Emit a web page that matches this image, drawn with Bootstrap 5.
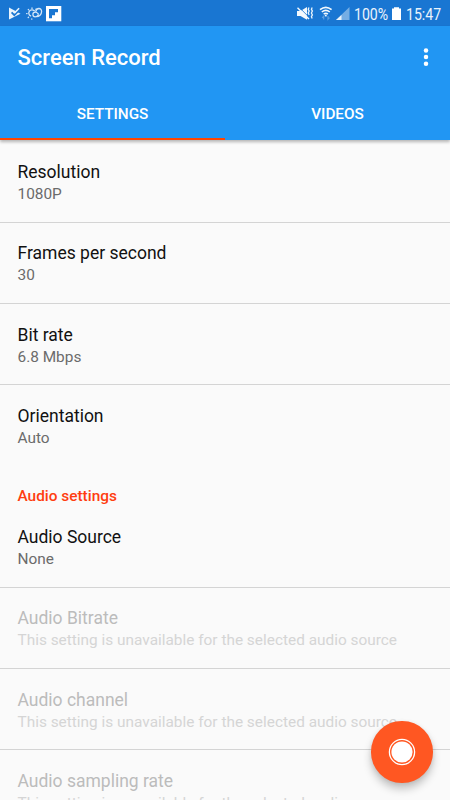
<!DOCTYPE html>
<html lang="en">
<head>
<meta charset="utf-8">
<meta name="viewport" content="width=device-width, initial-scale=1">
<title>Screen Record</title>
<link href="https://cdn.jsdelivr.net/npm/bootstrap@5.3.0/dist/css/bootstrap.min.css" rel="stylesheet">
<style>
body{font-family:Roboto,sans-serif;background:#fafafa;letter-spacing:0}
.screen{width:450px;height:800px;background:#fafafa}
.status{height:26px;background:#1976d2;padding:0 8px 0 7px;color:#e9f3fc}
.status svg{display:block;flex:none}
.condensed{font-size:17px;line-height:26px;transform-origin:0 50%;transform:scaleX(.83);white-space:nowrap;padding-top:2px}
.pct{width:38px}
.clock{width:36px;margin-left:5px}
.appbar{height:114px;background:#2196f3;box-shadow:0 2px 3px rgba(0,0,0,.28);z-index:2}
.titlebar{height:61.5px;padding:3px 20px 0 17.5px}
.app-title{font-size:22px;line-height:26px;font-weight:500}
.tabs .nav-link{height:52.5px;font-size:15.3px;font-weight:500;line-height:20px;color:#fff;padding:16.5px 0 0;border-bottom:2.5px solid transparent;border-radius:0}
.tabs .nav-link.active{border-bottom-color:#ff4500}
.settings-list{padding-top:1.5px}
.setting{height:81.25px;padding:19.5px 17.5px 0;background:transparent;border:0;border-bottom:1px solid #d4d4d4;border-radius:0}
.setting.last-in-group{border-bottom-color:transparent}
.label{font-size:17.5px;line-height:22px;color:#111}
.value{font-size:15.4px;line-height:23.5px;color:#6b6b6b}
.unavailable .label{color:#bcbcbc}
.unavailable .value{color:#d5d5d5}
.group-title{height:40px;padding:19.5px 17.5px 0;font-size:15.4px;line-height:20px;font-weight:500;color:#ff3d10}
.fab{right:17.5px;bottom:17.5px;width:61.25px;height:61.25px;background:#ff5722;box-shadow:0 6px 9px rgba(0,0,0,.22),0 1px 4px rgba(0,0,0,.08);z-index:3}
</style>
</head>
<body>
<div class="screen position-relative overflow-hidden d-flex flex-column">
  <div class="status d-flex align-items-center flex-shrink-0">
    <svg width="56" height="26" viewBox="0 0 56 26" fill="none">
      <path d="M2 7.500l11.500 6.200L2 19.500z" fill="#e9f3fc"/>
      <path d="M4.600 12.300l2.700 2.800 5-5.300" stroke="#1976d2" stroke-width="1.800"/>
      <path d="M7.500 13l4.600-4.800" stroke="#e9f3fc" stroke-width="1.600"/>
      <g stroke="#d3e6f8" stroke-width="1.300" stroke-linecap="round">
        <path d="M27.300 10.800a3.200 3.200 0 1 0-3.700 5.100"/>
        <path d="M25 7.900v.5M21.300 9.500l.4.400M19.600 13.600h.5M21.200 17.500l.4-.4M28.900 9.200l.3-.3M24.800 18.900v.3"/>
        <path d="M31.300 14.800c-.9 1.600-2 2-3 2-3.200-.2-3.200-4.600 0-4.600 1.200 0 2 .7 2.900 1.600M28.700 12c.7-4.700 5.900-4.400 5.900-.6 0 3-2.600 5.300-5 5.300"/>
      </g>
      <path d="M39 6h15.300v15.300H39z" fill="#fff"/>
      <path d="M42 9h9v3.300h-3v3h-3v3h-3z" fill="#1976d2"/>
    </svg>
    <svg class="ms-auto" width="58" height="26" viewBox="0 0 58 26" fill="none">
      <path d="M1 11h3.500L11 7v12.700L4.500 16H1z" fill="#f2f8fd"/>
      <path d="M1.500 7.700L13 19" stroke="#f2f8fd" stroke-width="1.500"/>
      <path d="M3.300 7.400L13.500 17.700" stroke="#1976d2" stroke-width=".8"/>
      <path d="M13 7.500l-.8 1.700 1 1.900-1 1.900 1 1.900M16.200 7.500l-.8 1.700 1 1.900-1 1.900 1 1.900-1 1.900.8 1.700" stroke="#e9f3fc" stroke-width="1.300"/>
      <path d="M24 9.700q5.800-4.800 11.600 0M25.800 12q4-3.200 8 0M27.700 14.100q2.100-1.600 4.200 0" stroke="#f2f8fd" stroke-width="1.600"/>
      <path d="M29.800 14.600v1.800" stroke="#f2f8fd" stroke-width="1.800"/>
      <path d="M27.700 19.500v-3.300l-1.500 1.600M32 16v3.300l1.500-1.600" stroke="#5c9fdf" stroke-width="1.200"/>
      <path d="M40 20L53.500 7v13z" fill="#75ade4"/>
      <path d="M40 20l5.500-5V20z" fill="#e9f3fc"/>
    </svg>
    <div class="pct"><div class="condensed">100%</div></div>
    <svg width="9" height="26" viewBox="0 0 9 26"><path d="M2 7.200h5v1.400h2V20H0V8.600h2z" fill="#fff"/></svg>
    <div class="clock"><div class="condensed">15:47</div></div>
  </div>
  <header class="appbar flex-shrink-0 position-relative text-white">
    <div class="titlebar d-flex align-items-center justify-content-between">
      <h1 class="app-title m-0">Screen Record</h1>
      <svg width="8" height="22" viewBox="0 0 8 22" fill="#fff"><circle cx="4" cy="3.500" r="2.250"/><circle cx="4" cy="10.100" r="2.250"/><circle cx="4" cy="16.700" r="2.250"/></svg>
    </div>
    <nav class="tabs nav nav-fill row g-0">
      <a class="nav-link col-6 text-center active" href="#">SETTINGS</a>
      <a class="nav-link col-6 text-center" href="#">VIDEOS</a>
    </nav>
  </header>
  <main class="settings-list">
    <div class="list-group rounded-0">
      <div class="setting list-group-item"><div class="label">Resolution</div><div class="value">1080P</div></div>
      <div class="setting list-group-item"><div class="label">Frames per second</div><div class="value">30</div></div>
      <div class="setting list-group-item"><div class="label">Bit rate</div><div class="value">6.8 Mbps</div></div>
      <div class="setting list-group-item last-in-group"><div class="label">Orientation</div><div class="value">Auto</div></div>
    </div>
    <div class="group-title">Audio settings</div>
    <div class="list-group rounded-0">
      <div class="setting list-group-item"><div class="label">Audio Source</div><div class="value">None</div></div>
      <div class="setting list-group-item unavailable"><div class="label">Audio Bitrate</div><div class="value">This setting is unavailable for the selected audio source</div></div>
      <div class="setting list-group-item unavailable"><div class="label">Audio channel</div><div class="value">This setting is unavailable for the selected audio source</div></div>
      <div class="setting list-group-item unavailable"><div class="label">Audio sampling rate</div><div class="value">This setting is unavailable for the selected audio source</div></div>
    </div>
  </main>
  <button class="fab btn rounded-circle position-absolute p-0 border-0 d-flex align-items-center justify-content-center" aria-label="Record">
    <svg width="28" height="28" viewBox="0 0 28 28"><circle cx="14" cy="14" r="12.600" fill="none" stroke="#fff" stroke-width="1.300"/><circle cx="14" cy="14" r="10.600" fill="#fff"/></svg>
  </button>
</div>
<script src="https://cdn.jsdelivr.net/npm/bootstrap@5.3.0/dist/js/bootstrap.bundle.min.js"></script>
</body>
</html>
